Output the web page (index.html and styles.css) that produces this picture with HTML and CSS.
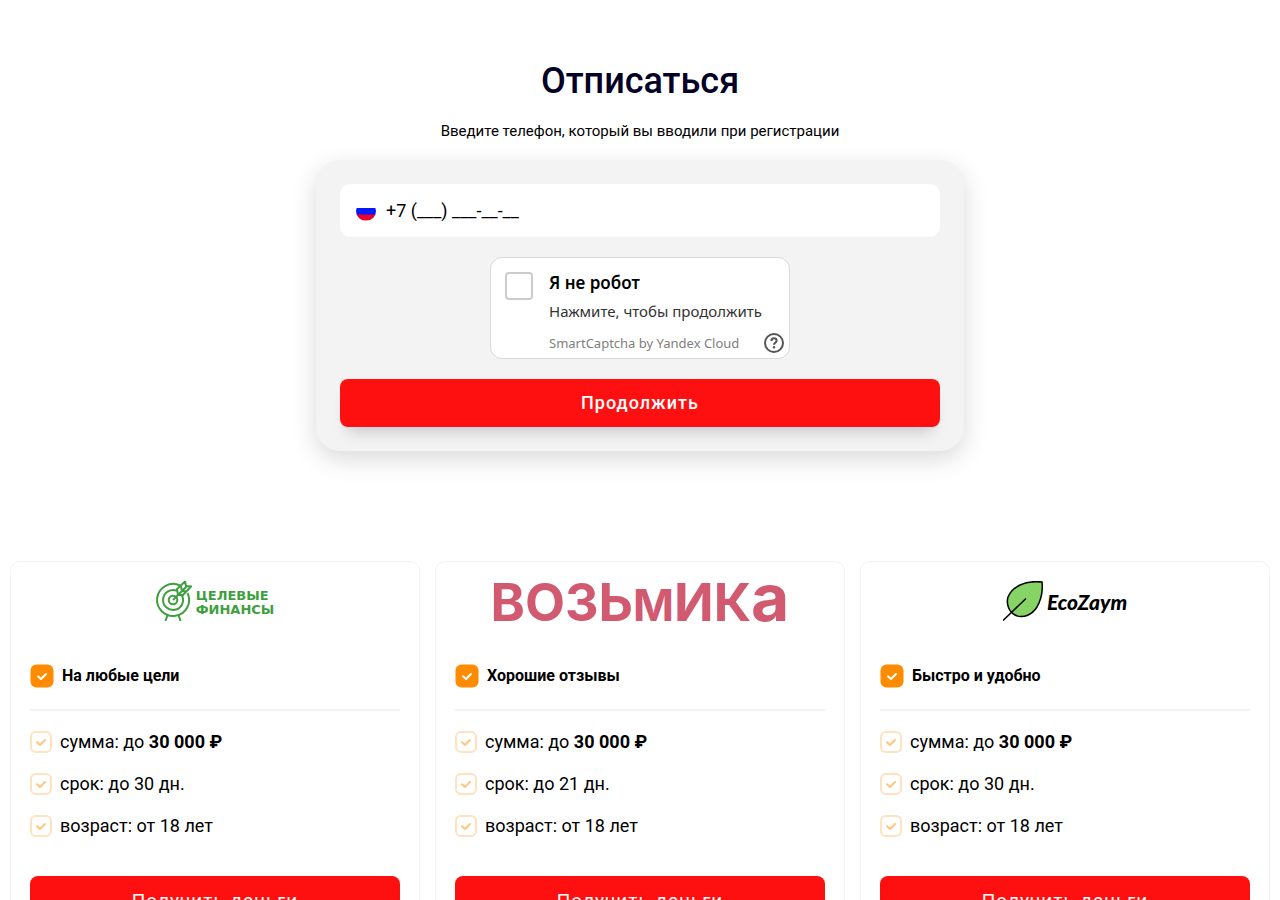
FILE: index.html
```html
<!DOCTYPE html>
<html lang="ru">
<head>
  <meta charset="UTF-8">
  <meta name="viewport" content="width=device-width, initial-scale=1.0">
  <title>Отписаться</title>
  <link rel="stylesheet" href="styles.css">
</head>
<body>
  <svg class="sprite" width="0" height="0" aria-hidden="true">
    <symbol id="check-full" viewBox="0 0 24 24">
      <rect x="0.5" y="0.5" width="23" height="23" rx="6" fill="#ff8c00"/>
      <path d="M8 12.300l3 2.700 5-5" fill="none" stroke="#fff" stroke-width="2" stroke-linecap="round" stroke-linejoin="round"/>
    </symbol>
    <symbol id="check-light" viewBox="0 0 22 22">
      <rect x="1" y="1" width="20" height="20" rx="5" fill="#fff" stroke="#ffe2bf" stroke-width="2"/>
      <path d="M7 11.200l3 2.800 5-5" fill="none" stroke="#ffc67f" stroke-width="2" stroke-linecap="round" stroke-linejoin="round"/>
    </symbol>
  </svg>

  <main class="unsubscribe">
    <h1>Отписаться</h1>
    <label class="hint" for="phone">Введите телефон, который вы вводили при регистрации</label>

    <form class="form">
      <div class="phone">
        <svg class="flag" width="20" height="20" viewBox="0 0 20 20" aria-hidden="true">
          <clipPath id="round"><circle cx="10" cy="10" r="10"/></clipPath>
          <g clip-path="url(#round)">
            <path d="M0 0h20v7H0z" fill="#fff"/>
            <path d="M0 7h20v7H0z" fill="#0019ff"/>
            <path d="M0 13.500h20v6H0z" fill="#e9002d"/>
          </g>
        </svg>
        <input type="tel" id="phone" value="+7 (___) ___-__-__">
      </div>

      <div class="captcha">
        <input type="checkbox" id="robot">
        <div class="captcha-text">
          <label class="captcha-title" for="robot">Я не робот</label>
          <span class="captcha-hint">Нажмите, чтобы продолжить</span>
          <a class="captcha-brand" href="#">SmartCaptcha by Yandex Cloud</a>
        </div>
        <button type="button" class="captcha-help" aria-label="Помощь">
          <svg width="20" height="20" viewBox="0 0 20 20">
            <circle cx="10" cy="10" r="9" fill="none" stroke="#555" stroke-width="2"/>
            <path d="M7.400 8c0-1.700 1.100-2.700 2.600-2.700s2.600 1 2.600 2.400c0 1.900-2.600 2-2.600 4" fill="none" stroke="#555" stroke-width="2"/>
            <circle cx="10" cy="14.300" r="1.200" fill="#555"/>
          </svg>
        </button>
      </div>

      <button type="submit" class="submit">Продолжить</button>
    </form>
  </main>

  <section class="offers">
    <article class="card">
      <div class="logo">
        <svg width="36" height="40" viewBox="0 0 36 40" fill="none" stroke="#3f9f3f" stroke-width="2" aria-hidden="true">
          <path d="M24 4.500A16 16 0 1 0 31.500 12"/>
          <path d="M21 9.800A10 10 0 1 0 26 14.500"/>
          <circle cx="17" cy="19" r="4.300"/>
          <path d="M17 19L31 5M22 14l-1-6 8-7.500 1 4.500 5 .5-8 8.500zM26 10l-1-4.500M26 10l5 .5"/>
          <path d="M11.500 34l-2 6M22.500 34l2 6"/>
        </svg>
        <span class="logo-goals">ЦЕЛЕВЫЕ<br>ФИНАНСЫ</span>
      </div>
      <h2><svg width="24" height="24"><use href="#check-full"/></svg>На любые цели</h2>
      <ul>
        <li><svg width="22" height="22"><use href="#check-light"/></svg><span>сумма: до <b>30 000 ₽</b></span></li>
        <li><svg width="22" height="22"><use href="#check-light"/></svg><span>срок: до 30 дн.</span></li>
        <li><svg width="22" height="22"><use href="#check-light"/></svg><span>возраст: от 18 лет</span></li>
      </ul>
      <a class="get" href="#">Получить деньги</a>
    </article>

    <article class="card">
      <div class="logo">
        <span class="logo-vozmika">ВОЗЬ<span class="logo-m">М</span>ИК<span class="logo-a">а</span></span>
      </div>
      <h2><svg width="24" height="24"><use href="#check-full"/></svg>Хорошие отзывы</h2>
      <ul>
        <li><svg width="22" height="22"><use href="#check-light"/></svg><span>сумма: до <b>30 000 ₽</b></span></li>
        <li><svg width="22" height="22"><use href="#check-light"/></svg><span>срок: до 21 дн.</span></li>
        <li><svg width="22" height="22"><use href="#check-light"/></svg><span>возраст: от 18 лет</span></li>
      </ul>
      <a class="get" href="#">Получить деньги</a>
    </article>

    <article class="card">
      <div class="logo">
        <svg width="40" height="40" viewBox="0 0 40 40" stroke="#000" stroke-width="1.500" aria-hidden="true">
          <path d="M39 1C22-1 9 6 5 16c-2 7 1 15 7 18 8 4 17 0 22-8 4-7 6-16 5-25z" fill="#86d465"/>
          <path d="M0 39.500L23 17.500" fill="none"/>
        </svg>
        <span class="logo-eco">EcoZaym</span>
      </div>
      <h2><svg width="24" height="24"><use href="#check-full"/></svg>Быстро и удобно</h2>
      <ul>
        <li><svg width="22" height="22"><use href="#check-light"/></svg><span>сумма: до <b>30 000 ₽</b></span></li>
        <li><svg width="22" height="22"><use href="#check-light"/></svg><span>срок: до 30 дн.</span></li>
        <li><svg width="22" height="22"><use href="#check-light"/></svg><span>возраст: от 18 лет</span></li>
      </ul>
      <a class="get" href="#">Получить деньги</a>
    </article>
  </section>
</body>
</html>
```
FILE: styles.css
```css
* {
  box-sizing: border-box;
}

body {
  margin: 0;
  font-family: Roboto, sans-serif;
  color: #000;
  background: #fff;
}

.sprite {
  position: absolute;
}

.unsubscribe {
  display: flex;
  flex-direction: column;
  align-items: center;
  padding: 60px 16px 110px;
}

h1 {
  margin: 0 0 20px;
  font-size: 36px;
  font-weight: 500;
  line-height: 42px;
  color: #020024;
}

.hint {
  margin-bottom: 20px;
  font-size: 15px;
  line-height: 18px;
}

.form {
  display: flex;
  flex-direction: column;
  gap: 20px;
  width: 100%;
  max-width: 648px;
  padding: 24px;
  border-radius: 24px;
  background: #f3f3f3;
  box-shadow: 0 8px 24px rgba(0, 0, 0, 0.15);
}

.phone {
  display: flex;
  align-items: center;
  gap: 10px;
  padding: 16px;
  border-radius: 10px;
  background: #fff;
}

.phone input {
  flex: 1;
  padding: 0;
  border: none;
  outline: none;
  font-family: inherit;
  font-size: 18px;
  line-height: 21px;
  color: #000;
  background: none;
}

.captcha {
  display: flex;
  align-items: flex-start;
  align-self: center;
  width: 100%;
  max-width: 300px;
  padding: 14px 5px 5px 14px;
  border: 1px solid #d9d9d9;
  border-radius: 12px;
  background: #fff;
  font-family: "Noto Sans", sans-serif;
}

.captcha input {
  appearance: none;
  width: 28px;
  height: 28px;
  margin: 0 16px 0 0;
  border: 2px solid #ccc;
  border-radius: 4px;
  background: #fff;
}

.captcha-text {
  display: flex;
  flex: 1;
  flex-direction: column;
  white-space: nowrap;
}

.captcha-title {
  font-size: 17px;
  font-weight: 600;
  line-height: 22px;
}

.captcha-hint {
  margin: 7px 0 12px;
  font-size: 15px;
  line-height: 20px;
  color: #333;
}

.captcha-brand {
  font-size: 13px;
  line-height: 20px;
  color: #808080;
  text-decoration: none;
}

.captcha-help {
  display: flex;
  align-self: flex-end;
  padding: 0;
  border: none;
  background: none;
  cursor: pointer;
}

.submit,
.get {
  border: none;
  border-radius: 8px;
  background: #ff1010;
  color: #fff;
  font-family: inherit;
  letter-spacing: 1px;
  cursor: pointer;
}

.submit {
  padding: 13px 16px;
  font-size: 18px;
  font-weight: 500;
  line-height: 22px;
  box-shadow: 0 12px 16px -8px rgba(2, 0, 36, 0.2);
}

.offers {
  display: grid;
  grid-template-columns: repeat(3, 1fr);
  gap: 15px;
  padding: 0 10px 40px;
}

.card {
  padding: 19px;
  border: 1px solid #f3f3f3;
  border-radius: 10px;
}

.logo {
  display: flex;
  align-items: center;
  justify-content: center;
  gap: 4px;
  height: 40px;
  white-space: nowrap;
}

.logo-goals {
  padding-top: 4px;
  font-family: "DejaVu Sans", sans-serif;
  font-size: 13px;
  font-weight: 700;
  line-height: 14px;
  color: #3f9f3f;
}

.logo-vozmika {
  font-family: Inter, sans-serif;
  font-size: 52px;
  font-weight: 700;
  line-height: 40px;
  color: #d15a70;
}

.logo-m {
  font-size: 44px;
}

.logo-a {
  font-size: 66px;
  line-height: 40px;
}

.logo-eco {
  font-family: Lato, sans-serif;
  font-size: 21px;
  font-style: italic;
  font-weight: 900;
}

.card h2 {
  display: flex;
  align-items: center;
  gap: 8px;
  margin: 43px 0 20px;
  padding-bottom: 21px;
  border-bottom: 2px solid #f3f3f3;
  font-size: 16px;
  font-weight: 700;
  line-height: 24px;
}

.card ul {
  display: flex;
  flex-direction: column;
  gap: 20px;
  margin: 0 0 39px;
  padding: 0;
  list-style: none;
}

.card li {
  display: flex;
  align-items: center;
  gap: 8px;
  font-size: 18px;
  line-height: 22px;
}

.get {
  display: block;
  font-size: 19px;
  line-height: 50px;
  text-align: center;
  text-decoration: none;
}

@media (max-width: 900px) {
  .offers { grid-template-columns: 1fr; }
}
```
